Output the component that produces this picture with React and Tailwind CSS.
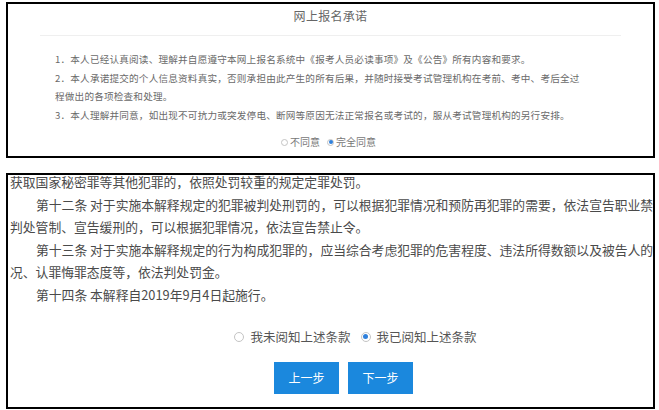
import React from 'react';

const cjk = { fontFamily: '"Noto Sans CJK SC", "Noto Sans", sans-serif' };

const promises = [
  '1．本人已经认真阅读、理解并自愿遵守本网上报名系统中《报考人员必读事项》及《公告》所有内容和要求。',
  '2．本人承诺提交的个人信息资料真实，否则承担由此产生的所有后果，并随时接受考试管理机构在考前、考中、考后全过程做出的各项检查和处理。',
  '3．本人理解并同意，如出现不可抗力或突发停电、断网等原因无法正常报名或考试的，服从考试管理机构的另行安排。',
];

const lawLines = [
  { text: '获取国家秘密罪等其他犯罪的，依照处罚较重的规定定罪处罚。', indent: false },
  { text: '第十二条 对于实施本解释规定的犯罪被判处刑罚的，可以根据犯罪情况和预防再犯罪的需要，依法宣告职业禁', indent: true },
  { text: '判处管制、宣告缓刑的，可以根据犯罪情况，依法宣告禁止令。', indent: false },
  { text: '第十三条 对于实施本解释规定的行为构成犯罪的，应当综合考虑犯罪的危害程度、违法所得数额以及被告人的', indent: true },
  { text: '况、认罪悔罪态度等，依法判处罚金。', indent: false },
  { text: '第十四条 本解释自2019年9月4日起施行。', indent: true },
];

const Radio = ({ checked, size = 'sm' }) => {
  const box = size === 'sm' ? 'w-[7px] h-[7px]' : 'w-[10px] h-[10px]';
  const dot = size === 'sm' ? 'w-[4px] h-[4px]' : 'w-[5px] h-[5px]';
  return (
    <span className={`${box} rounded-full border border-[#c4c4c4] bg-white flex items-center justify-center shrink-0`}>
      {checked && <span className={`${dot} rounded-full bg-[#2f80dc]`} />}
    </span>
  );
};

export default function App() {
  return (
    <div className="w-[659px] h-[410px] bg-white overflow-hidden pt-[2px] pl-[6px]" style={cjk}>
      {/* 网上报名承诺 */}
      <section className="w-[649px] h-[156px] border-2 border-black flex flex-col">
        <h1 className="text-[12px] leading-[16px] text-[#666] text-center pt-[4px] tracking-[0.3px]">网上报名承诺</h1>
        <div className="h-px bg-[#efefef] mx-[32px] mt-[11px]" />
        <div className="pl-[47px] w-[580px] mt-[14px] text-[9.6px] tracking-[0.2px] leading-[18.5px] text-[#6a6a6a]">
          {promises.map((p) => (
            <p key={p}>{p}</p>
          ))}
        </div>
        <div className="flex items-center justify-center gap-[2px] mt-[11px] pr-[4px] text-[10px] leading-[14px] text-[#777]">
          <Radio />
          <span className="mr-[5px]">不同意</span>
          <Radio checked />
          <span>完全同意</span>
        </div>
      </section>

      {/* 条款 */}
      <section className="w-[649px] h-[236px] mt-[15px] border-2 border-black overflow-hidden flex flex-col">
        <div className="-mt-[4px] pl-[2px] text-[12.8px] leading-[22.6px] text-[#4a4a4a] whitespace-nowrap">
          {lawLines.map((l) => (
            <p key={l.text} className={l.indent ? 'pl-[26px]' : ''}>{l.text}</p>
          ))}
        </div>
        <div className="flex items-center justify-center gap-[6px] mt-[21px] pl-[50px] text-[12.5px] leading-[18px] text-[#555]">
          <Radio size="md" />
          <span className="mr-[4px]">我未阅知上述条款</span>
          <Radio size="md" checked />
          <span>我已阅知上述条款</span>
        </div>
        <div className="flex justify-center gap-[9px] mt-[16px] pl-[26px]">
          <button className="w-[65px] h-[32px] bg-[#1b88dd] text-white text-[12px]">上一步</button>
          <button className="w-[65px] h-[32px] bg-[#1b88dd] text-white text-[12px]">下一步</button>
        </div>
      </section>
    </div>
  );
}
